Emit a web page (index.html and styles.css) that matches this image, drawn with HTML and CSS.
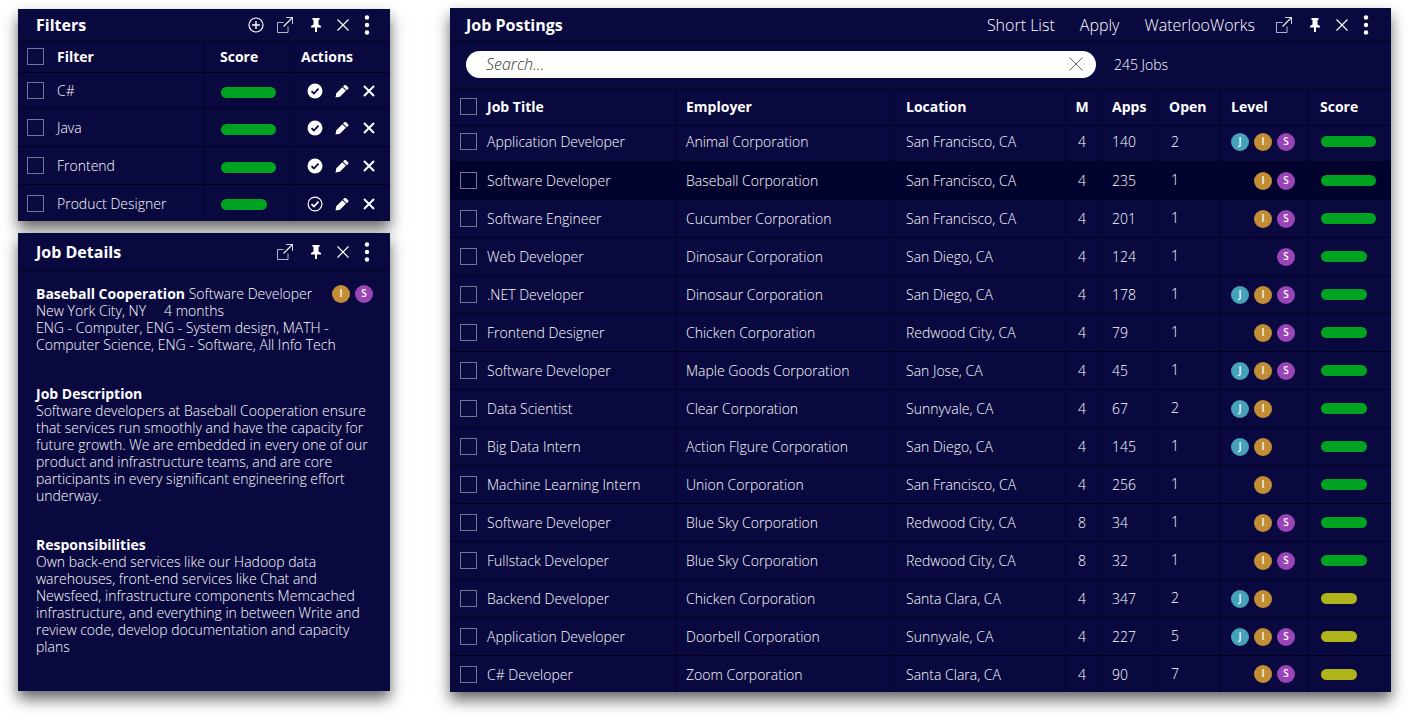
FILE: index.html
```
<!DOCTYPE html>
<html lang="en">
<head>
<meta charset="utf-8">
<meta name="viewport" content="width=device-width, initial-scale=1">
<title>Job Postings</title>
<link rel="stylesheet" href="styles.css">
</head>
<body>
<svg class="sprite" aria-hidden="true">
  <symbol id="i-plus" viewBox="0 0 16 16"><circle cx="8" cy="8" r="7" fill="none" stroke="#fff" stroke-width="1.2"/><path d="M8 4v8M4 8h8" stroke="#fff" stroke-width="1.4"/></symbol>
  <symbol id="i-pop" viewBox="0 0 16 16"><path d="M6.500 5.500h-6v10h10.500V9.500" fill="none" stroke="#fff" stroke-opacity=".7"/><path d="M9 .5h6.500V7" fill="none" stroke="#fff" stroke-opacity=".8"/><path d="M15.500 .5 6.500 9.500" stroke="#fff" stroke-width="1.100"/></symbol>
  <symbol id="i-pin" viewBox="0 0 16 16"><path d="M4.500 1h7v2h-1v4.500l2.500 1.500v1.500H9V15H7v-4.500H3V9l2.500-1.500V3h-1z" fill="#fff"/></symbol>
  <symbol id="i-close" viewBox="0 0 16 16"><path d="M2.500 2.500l11 11M13.500 2.500l-11 11" stroke="#fff" stroke-width="1.200"/></symbol>
  <symbol id="i-more" viewBox="0 0 6 20"><g fill="#fff"><circle cx="3" cy="2.500" r="2.200"/><circle cx="3" cy="10" r="2.200"/><circle cx="3" cy="17.500" r="2.200"/></g></symbol>
  <symbol id="i-on" viewBox="0 0 16 16"><circle cx="8" cy="8" r="7.500" fill="#fff"/><path d="M4.500 8.200l2.400 2.300 4.600-4.800" fill="none" stroke="#090940" stroke-width="1.800"/></symbol>
  <symbol id="i-off" viewBox="0 0 16 16"><circle cx="8" cy="8" r="6.900" fill="none" stroke="#fff" stroke-width="1.200"/><path d="M4.500 8.200l2.400 2.300 4.600-4.800" fill="none" stroke="#fff" stroke-width="1.800"/></symbol>
  <symbol id="i-edit" viewBox="0 0 16 16"><path d="M1.500 14.500l.8-4.300 6-6 3.600 3.600-6 6zM9 3.500l1.600-1.600h1.200l2.600 2.600v1.200l-1.700 1.600z" fill="#fff"/></symbol>
  <symbol id="i-del" viewBox="0 0 16 16"><path d="M3 3l10 10M13 3L3 13" stroke="#fff" stroke-width="2"/></symbol>
  <symbol id="i-clear" viewBox="0 0 16 16"><path d="M1.500 1.500l13 13M14.500 1.500l-13 13" stroke="#666" stroke-width="1"/></symbol>
</svg>
<main class="board">
  <div class="side">
    <section class="panel filters">
      <header class="bar">
        <h2>Filters</h2>
        <button class="tool plus" aria-label="Add filter"><svg class="ico"><use href="#i-plus"/></svg></button>
        <button class="tool pop" aria-label="Open in window"><svg class="ico"><use href="#i-pop"/></svg></button>
        <button class="tool pin" aria-label="Pin"><svg class="ico"><use href="#i-pin"/></svg></button>
        <button class="tool close" aria-label="Close"><svg class="ico"><use href="#i-close"/></svg></button>
        <button class="tool more" aria-label="More"><svg class="dots"><use href="#i-more"/></svg></button>
      </header>
      <table>
        <colgroup><col class="f-name"><col class="f-score"><col class="f-act"></colgroup>
        <thead><tr><th><div class="pick"><input type="checkbox" id="f0"><label for="f0">Filter</label></div></th><th>Score</th><th>Actions</th></tr></thead>
        <tbody>
          <tr><td><div class="pick"><input type="checkbox" id="f1"><label for="f1">C#</label></div></td><td><div class="score high"></div></td><td><div class="acts"><button aria-label="Disable"><svg class="ico"><use href="#i-on"/></svg></button><button aria-label="Edit"><svg class="ico"><use href="#i-edit"/></svg></button><button aria-label="Delete"><svg class="ico"><use href="#i-del"/></svg></button></div></td></tr>
          <tr><td><div class="pick"><input type="checkbox" id="f2"><label for="f2">Java</label></div></td><td><div class="score high"></div></td><td><div class="acts"><button aria-label="Disable"><svg class="ico"><use href="#i-on"/></svg></button><button aria-label="Edit"><svg class="ico"><use href="#i-edit"/></svg></button><button aria-label="Delete"><svg class="ico"><use href="#i-del"/></svg></button></div></td></tr>
          <tr><td><div class="pick"><input type="checkbox" id="f3"><label for="f3">Frontend</label></div></td><td><div class="score high"></div></td><td><div class="acts"><button aria-label="Disable"><svg class="ico"><use href="#i-on"/></svg></button><button aria-label="Edit"><svg class="ico"><use href="#i-edit"/></svg></button><button aria-label="Delete"><svg class="ico"><use href="#i-del"/></svg></button></div></td></tr>
          <tr><td><div class="pick"><input type="checkbox" id="f4"><label for="f4">Product Designer</label></div></td><td><div class="score mid"></div></td><td><div class="acts"><button aria-label="Enable"><svg class="ico"><use href="#i-off"/></svg></button><button aria-label="Edit"><svg class="ico"><use href="#i-edit"/></svg></button><button aria-label="Delete"><svg class="ico"><use href="#i-del"/></svg></button></div></td></tr>
        </tbody>
      </table>
    </section>
    <section class="panel details">
      <header class="bar">
        <h2>Job Details</h2>
        <button class="tool pop" aria-label="Open in window"><svg class="ico"><use href="#i-pop"/></svg></button>
        <button class="tool pin" aria-label="Pin"><svg class="ico"><use href="#i-pin"/></svg></button>
        <button class="tool close" aria-label="Close"><svg class="ico"><use href="#i-close"/></svg></button>
        <button class="tool more" aria-label="More"><svg class="dots"><use href="#i-more"/></svg></button>
      </header>
      <div class="body">
        <div class="summary">
          <div class="lead"><p><strong>Baseball Cooperation</strong> Software Developer</p><div class="pair"><span class="lv i">I</span><span class="lv s">S</span></div></div>
          <p class="where"><span>New York City, NY</span><span>4 months</span></p>
          <p>ENG - Computer, ENG - System design, MATH - Computer Science, ENG - Software, All Info Tech</p>
        </div>
        <div><h3>Job Description</h3>
        <p>Software developers at Baseball Cooperation ensure that services run smoothly and have the capacity for future growth. We are embedded in every one of our product and infrastructure teams, and are core participants in every significant engineering effort underway.</p></div>
        <div><h3>Responsibilities</h3>
        <p>Own back-end services like our Hadoop data warehouses, front-end services like Chat and Newsfeed, infrastructure components Memcached infrastructure, and everything in between Write and review code, develop documentation and capacity plans</p></div>
      </div>
    </section>
  </div>
  <section class="panel postings">
    <header class="bar">
      <h2>Job Postings</h2>
      <nav><a href="#short">Short List</a><a href="#apply">Apply</a><a href="#ww">WaterlooWorks</a></nav>
      <button class="tool pop" aria-label="Open in window"><svg class="ico"><use href="#i-pop"/></svg></button>
      <button class="tool pin" aria-label="Pin"><svg class="ico"><use href="#i-pin"/></svg></button>
      <button class="tool close" aria-label="Close"><svg class="ico"><use href="#i-close"/></svg></button>
      <button class="tool more" aria-label="More"><svg class="dots"><use href="#i-more"/></svg></button>
    </header>
    <div class="find">
      <div class="search"><input type="text" placeholder="Search..." aria-label="Search jobs"><button aria-label="Clear search"><svg class="ico"><use href="#i-clear"/></svg></button></div>
      <span>245 Jobs</span>
    </div>
    <table>
      <colgroup><col class="c-title"><col class="c-emp"><col class="c-loc"><col class="c-m"><col class="c-apps"><col class="c-open"><col class="c-level"><col class="c-score"></colgroup>
      <thead><tr><th><div class="pick"><input type="checkbox" id="j0"><label for="j0">Job Title</label></div></th><th>Employer</th><th>Location</th><th>M</th><th>Apps</th><th>Open</th><th>Level</th><th>Score</th></tr></thead>
      <tbody>
        <tr><td><div class="pick"><input type="checkbox" id="j1"><label for="j1">Application Developer</label></div></td><td>Animal Corporation</td><td>San Francisco, CA</td><td>4</td><td>140</td><td>2</td><td><div class="levels"><span class="lv j">J</span><span class="lv i">I</span><span class="lv s">S</span></div></td><td><div class="score high"></div></td></tr>
        <tr class="active"><td><div class="pick"><input type="checkbox" id="j2"><label for="j2">Software Developer</label></div></td><td>Baseball Corporation</td><td>San Francisco, CA</td><td>4</td><td>235</td><td>1</td><td><div class="levels"><span class="lv i">I</span><span class="lv s">S</span></div></td><td><div class="score high"></div></td></tr>
        <tr><td><div class="pick"><input type="checkbox" id="j3"><label for="j3">Software Engineer</label></div></td><td>Cucumber Corporation</td><td>San Francisco, CA</td><td>4</td><td>201</td><td>1</td><td><div class="levels"><span class="lv i">I</span><span class="lv s">S</span></div></td><td><div class="score high"></div></td></tr>
        <tr><td><div class="pick"><input type="checkbox" id="j4"><label for="j4">Web Developer</label></div></td><td>Dinosaur Corporation</td><td>San Diego, CA</td><td>4</td><td>124</td><td>1</td><td><div class="levels"><span class="lv s">S</span></div></td><td><div class="score mid"></div></td></tr>
        <tr><td><div class="pick"><input type="checkbox" id="j5"><label for="j5">.NET Developer</label></div></td><td>Dinosaur Corporation</td><td>San Diego, CA</td><td>4</td><td>178</td><td>1</td><td><div class="levels"><span class="lv j">J</span><span class="lv i">I</span><span class="lv s">S</span></div></td><td><div class="score mid"></div></td></tr>
        <tr><td><div class="pick"><input type="checkbox" id="j6"><label for="j6">Frontend Designer</label></div></td><td>Chicken Corporation</td><td>Redwood City, CA</td><td>4</td><td>79</td><td>1</td><td><div class="levels"><span class="lv i">I</span><span class="lv s">S</span></div></td><td><div class="score mid"></div></td></tr>
        <tr><td><div class="pick"><input type="checkbox" id="j7"><label for="j7">Software Developer</label></div></td><td>Maple Goods Corporation</td><td>San Jose, CA</td><td>4</td><td>45</td><td>1</td><td><div class="levels"><span class="lv j">J</span><span class="lv i">I</span><span class="lv s">S</span></div></td><td><div class="score mid"></div></td></tr>
        <tr><td><div class="pick"><input type="checkbox" id="j8"><label for="j8">Data Scientist</label></div></td><td>Clear Corporation</td><td>Sunnyvale, CA</td><td>4</td><td>67</td><td>2</td><td><div class="levels"><span class="lv j">J</span><span class="lv i">I</span></div></td><td><div class="score mid"></div></td></tr>
        <tr><td><div class="pick"><input type="checkbox" id="j9"><label for="j9">Big Data Intern</label></div></td><td>Action FIgure Corporation</td><td>San Diego, CA</td><td>4</td><td>145</td><td>1</td><td><div class="levels"><span class="lv j">J</span><span class="lv i">I</span></div></td><td><div class="score mid"></div></td></tr>
        <tr><td><div class="pick"><input type="checkbox" id="j10"><label for="j10">Machine Learning Intern</label></div></td><td>Union Corporation</td><td>San Francisco, CA</td><td>4</td><td>256</td><td>1</td><td><div class="levels"><span class="lv i">I</span></div></td><td><div class="score mid"></div></td></tr>
        <tr><td><div class="pick"><input type="checkbox" id="j11"><label for="j11">Software Developer</label></div></td><td>Blue Sky Corporation</td><td>Redwood City, CA</td><td>8</td><td>34</td><td>1</td><td><div class="levels"><span class="lv i">I</span><span class="lv s">S</span></div></td><td><div class="score mid"></div></td></tr>
        <tr><td><div class="pick"><input type="checkbox" id="j12"><label for="j12">Fullstack Developer</label></div></td><td>Blue Sky Corporation</td><td>Redwood City, CA</td><td>8</td><td>32</td><td>1</td><td><div class="levels"><span class="lv i">I</span><span class="lv s">S</span></div></td><td><div class="score mid"></div></td></tr>
        <tr><td><div class="pick"><input type="checkbox" id="j13"><label for="j13">Backend Developer</label></div></td><td>Chicken Corporation</td><td>Santa Clara, CA</td><td>4</td><td>347</td><td>2</td><td><div class="levels"><span class="lv j">J</span><span class="lv i">I</span></div></td><td><div class="score low"></div></td></tr>
        <tr><td><div class="pick"><input type="checkbox" id="j14"><label for="j14">Application Developer</label></div></td><td>Doorbell Corporation</td><td>Sunnyvale, CA</td><td>4</td><td>227</td><td>5</td><td><div class="levels"><span class="lv j">J</span><span class="lv i">I</span><span class="lv s">S</span></div></td><td><div class="score low"></div></td></tr>
        <tr><td><div class="pick"><input type="checkbox" id="j15"><label for="j15">C# Developer</label></div></td><td>Zoom Corporation</td><td>Santa Clara, CA</td><td>4</td><td>90</td><td>7</td><td><div class="levels"><span class="lv i">I</span><span class="lv s">S</span></div></td><td><div class="score low"></div></td></tr>
      </tbody>
    </table>
  </section>
</main>
</body>
</html>
```
FILE: styles.css
```
* { box-sizing: border-box; }

body {
  margin: 0;
  padding: 8px 18px 24px;
  background: #fff;
  color: #fff;
  font: 300 14px/17px "Open Sans", "Noto Sans", sans-serif;
}

h2, h3, p { margin: 0; }
h2 { flex: 1; font-size: 16px; line-height: 20px; font-weight: 700; }
h3 { font-size: 14px; line-height: 17px; font-weight: 700; }
strong { font-weight: 700; }
a { color: inherit; text-decoration: none; }
button { margin: 0; padding: 0; border: 0; background: none; cursor: pointer; }

.sprite { display: none; }
.ico { display: block; width: 16px; height: 16px; }
.dots { display: block; width: 6px; height: 20px; }

.board { display: grid; grid-template-columns: 372px 1fr; gap: 60px; align-items: start; }
.side { display: flex; flex-direction: column; gap: 12px; padding-top: 1px; }
.panel { background: #090940; box-shadow: 0 8px 14px rgba(0, 0, 0, .6); }

.bar { display: flex; align-items: center; padding: 0 13px 0 18px; border-bottom: 1px solid #03031f; }
.filters .bar { height: 33px; }
.details .bar { height: 38px; }
.postings .bar { height: 34px; padding: 0 15px 0 16px; }
.bar nav { display: flex; gap: 25px; margin-right: 11px; font-size: 16px; line-height: 20px; }

.tool { display: flex; align-items: center; justify-content: center; }
.plus { width: 22px; }
.pop { width: 36px; }
.pin { width: 26px; }
.close { width: 28px; }
.more { width: 20px; }

table { width: 100%; table-layout: fixed; border-collapse: separate; border-spacing: 0; }
th, td { height: 38px; padding: 0; text-align: left; vertical-align: middle; border-bottom: 1px solid #03031f; }
th { font-weight: 700; }
th + th, td + td { border-left: 1px solid #04042a; }
tbody tr:first-child td, tbody tr:last-child td { height: 36px; }
tbody tr:last-child td { border-bottom: 0; }
.active { background: #02022e; }

.pick { display: flex; align-items: center; }
.pick input {
  appearance: none;
  flex: none;
  width: 17px;
  height: 17px;
  margin: 0;
  border: 1px solid #74749a;
}

.filters th { height: 31px; padding-bottom: 2px; }
.filters .pick { padding-left: 9px; gap: 13px; }
.filters th:nth-child(2) { padding-left: 15px; }
.filters td:nth-child(2) { padding-left: 16px; padding-top: 3px; }
.filters th:nth-child(3) { padding-left: 7px; }
.filters td:nth-child(3) { padding-left: 7px; padding-top: 1px; }
.f-name { width: 186px; }
.f-score { width: 89px; }
.f-act { width: 97px; }
.acts { display: flex; }
.acts button { width: 27px; display: flex; justify-content: center; }

.score { height: 11px; border-radius: 6px; background: #00a321; }
.high { width: 55px; }
.mid { width: 46px; }
.low { width: 36px; background: #afb41b; }

.body { display: flex; flex-direction: column; gap: 32px; padding: 14px 17px 36px 18px; }
.lead { display: flex; justify-content: space-between; height: 17px; align-items: center; }
.where { display: flex; gap: 18px; }
.pair { display: flex; gap: 5px; }

.lv {
  display: block;
  width: 18px;
  height: 18px;
  border-radius: 50%;
  font-size: 10px;
  line-height: 17px;
  font-weight: 600;
  text-align: center;
}
.j { background: #46a2ba; }
.i { background: #c28e35; }
.s { background: #9944b7; }
.levels { display: grid; grid-template-columns: 18px 18px 18px; gap: 5px; }
.levels .j { grid-column: 1; }
.levels .i { grid-column: 2; }
.levels .s { grid-column: 3; }

.find { display: flex; align-items: center; gap: 18px; height: 48px; padding: 0 16px 3px; border-bottom: 1px solid #03031f; }
.search { display: flex; align-items: center; flex: 0 1 630px; height: 27px; padding: 0 12px 0 20px; border-radius: 14px; background: #fff; }
.search input {
  flex: 1;
  min-width: 0;
  padding: 0;
  border: 0;
  outline: 0;
  background: none;
  color: #333;
  font: italic 300 16px/20px "Open Sans", "Noto Sans", sans-serif;
}
.search input::placeholder { color: #333; opacity: 1; }

.postings th { height: 36px; padding-bottom: 2px; }
.postings tbody tr:first-child td { padding-bottom: 4px; }
.postings .pick { padding-left: 10px; gap: 10px; }
.postings tr > :nth-child(2) { padding-left: 10px; }
.postings tr > :nth-child(3) { padding-left: 12px; }
.postings tr > :nth-child(4) { text-align: center; padding-right: 3px; }
.postings tr > :nth-child(5) { padding-left: 10px; }
.postings th:nth-child(6) { padding-left: 11px; }
.postings td:nth-child(6) { padding-left: 13px; padding-bottom: 2px; }
.postings tr > :nth-child(7) { padding-left: 11px; }
.postings tr > :nth-child(8) { padding-left: 13px; }
.postings th:nth-child(8) { padding-left: 12px; }
.c-title { width: 225px; }
.c-emp { width: 218px; }
.c-loc { width: 172px; }
.c-m { width: 36px; }
.c-apps { width: 56px; }
.c-open { width: 62px; }
.c-level { width: 88px; }
.c-score { width: 84px; }
```
